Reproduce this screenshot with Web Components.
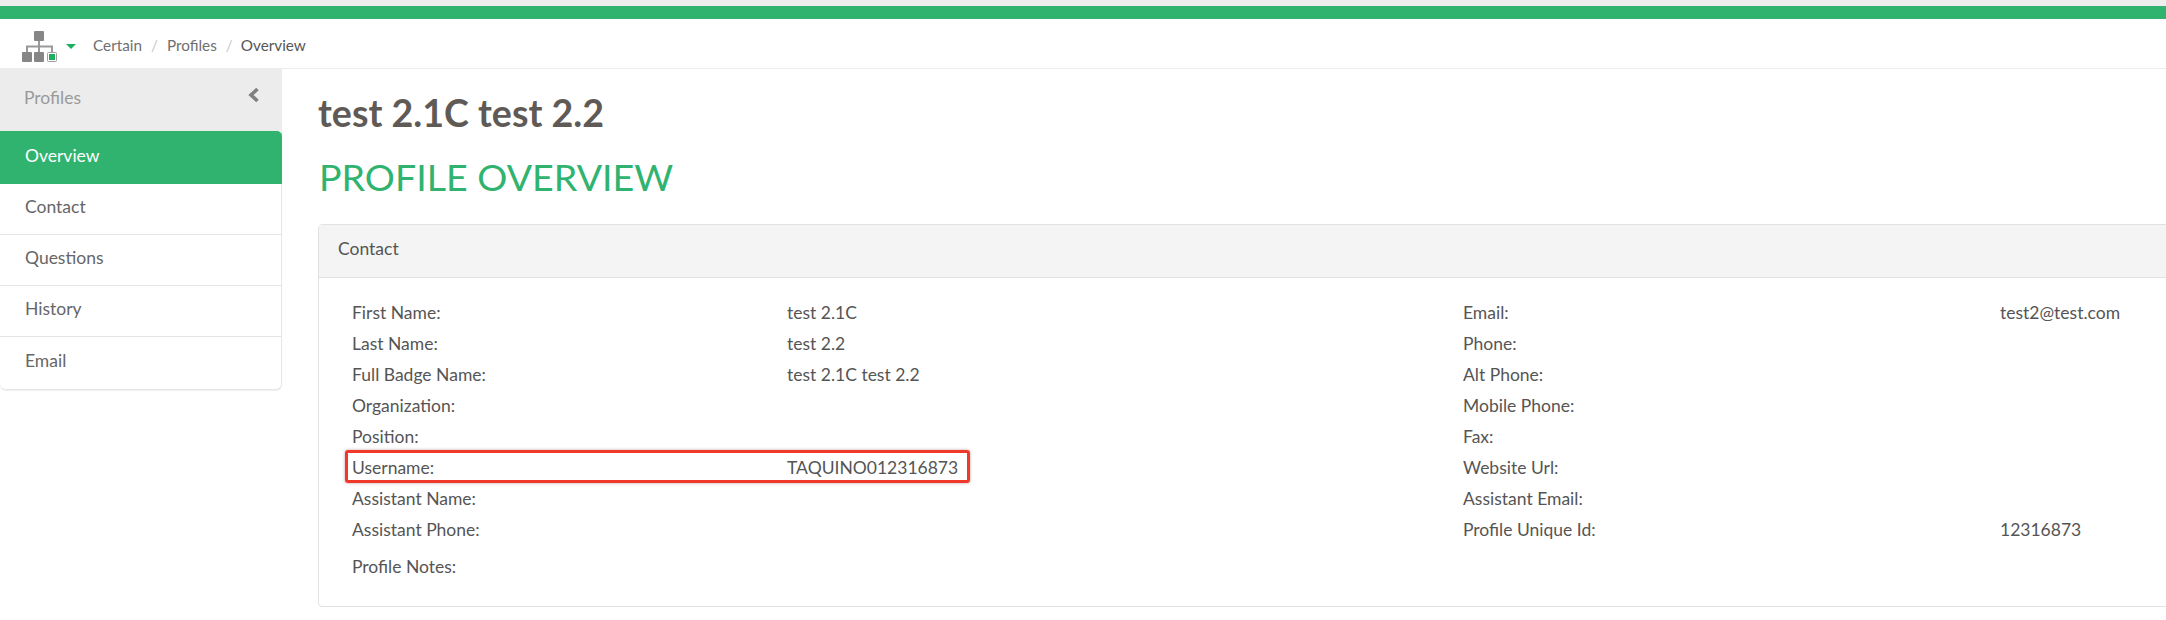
<!DOCTYPE html>
<html>
<head>
<meta charset="utf-8">
<title>Profile Overview</title>
<style>
    html, body { margin: 0; padding: 0; background: #fff; overflow: hidden; }
    body { font-family: Lato, "Liberation Sans", sans-serif; font-size: 17.5px; color: #555; }
</style>
</head>
<body>
<page-shell>
    <bread-crumbs slot="top"></bread-crumbs>
    <side-nav slot="side" title="Profiles">
        <nav-item active>Overview</nav-item>
        <nav-item>Contact</nav-item>
        <nav-item>Questions</nav-item>
        <nav-item>History</nav-item>
        <nav-item last>Email</nav-item>
    </side-nav>
    <page-title>test 2.1C test 2.2</page-title>
    <section-title>PROFILE OVERVIEW</section-title>
    <info-card heading="Contact">
        <info-list slot="left" style="--label-width: 435px">
            <info-row label="First Name:">test 2.1C</info-row>
            <info-row label="Last Name:">test 2.2</info-row>
            <info-row label="Full Badge Name:">test 2.1C test 2.2</info-row>
            <info-row label="Organization:"></info-row>
            <info-row label="Position:"></info-row>
            <info-row label="Username:" marked>TAQUINO012316873</info-row>
            <info-row label="Assistant Name:"></info-row>
            <info-row label="Assistant Phone:"></info-row>
            <info-row label="Profile Notes:" class="notes" style="margin-top: 6px"></info-row>
        </info-list>
        <info-list slot="right" style="--label-width: 537px">
            <info-row label="Email:">test2@test.com</info-row>
            <info-row label="Phone:"></info-row>
            <info-row label="Alt Phone:"></info-row>
            <info-row label="Mobile Phone:"></info-row>
            <info-row label="Fax:"></info-row>
            <info-row label="Website Url:"></info-row>
            <info-row label="Assistant Email:"></info-row>
            <info-row label="Profile Unique Id:">12316873</info-row>
        </info-list>
    </info-card>
</page-shell>

<script>
    // small helper, every element just sets its shadow html once
    class BaseElement extends HTMLElement {
        constructor(html) {
            super();
            this.attachShadow({ mode: 'open' });
            this.shadowRoot.innerHTML = html;
        }
    }

    class PageShell extends BaseElement {
        constructor() {
            super(`
                <style>
                    :host { display: block; width: 2166px; height: 620px; overflow: hidden; }
                    .strip { height: 6px; background: #eeeeee; }
                    .green { height: 13px; background: #30b36f; }
                    .top { height: 49px; border-bottom: 1px solid #ececec; }
                    .cols { display: flex; }
                    .main { flex: none; width: 1884px; padding-left: 36px; }
                </style>
                <div class="strip"></div>
                <div class="green"></div>
                <div class="top"><slot name="top"></slot></div>
                <div class="cols">
                    <slot name="side"></slot>
                    <div class="main"><slot></slot></div>
                </div>
            `);
        }
    }

    class BreadCrumbs extends BaseElement {
        constructor() {
            super(`
                <style>
                    :host { display: flex; align-items: center; height: 49px; padding-left: 22px; font-size: 15.3px; color: #6f6f6f; }
                    svg { display: block; }
                    .icon { margin-top: 5px; }
                    .caret { margin: 6px 0 0 9px; }
                    .items { display: flex; margin-left: 17px; margin-top: 3px; }
                    .sep { color: #c8c8c8; padding: 0 9px; }
                    .sep + span + .sep { padding-right: 8px; }
                    .current { color: #555; }
                </style>
                <svg class="icon" width="35" height="31" viewBox="0 0 35 31">
                    <rect x="12" y="0" width="10" height="10" rx="1" fill="#868686"/>
                    <path d="M17 10v11M5 21v-5.5h25V21" fill="none" stroke="#999" stroke-width="2"/>
                    <rect x="0" y="21" width="10" height="10" rx="1" fill="#868686"/>
                    <rect x="12" y="21" width="10" height="10" rx="1" fill="#868686"/>
                    <rect x="25.5" y="21.5" width="9" height="9" rx="1" fill="#fff" stroke="#a0a0a0"/>
                    <rect x="27" y="23" width="6" height="6" fill="#1fae5f"/>
                </svg>
                <svg class="caret" width="10" height="5" viewBox="0 0 10 5"><path d="M0 0h10L5 5z" fill="#1fae5f"/></svg>
                <div class="items">
                    <span>Certain</span><span class="sep">/</span><span>Profiles</span><span class="sep">/</span><span class="current">Overview</span>
                </div>
            `);
        }
    }

    class SideNav extends BaseElement {
        constructor() {
            super(`
                <style>
                    :host { display: block; flex: none; width: 282px; }
                    .head { display: flex; justify-content: space-between; align-items: center; height: 62px; box-sizing: border-box;
                            padding: 0 22px 5px 24px; background: #ececec; color: #9a9a9a; }
                    svg { display: block; margin-top: -5px; }
                    .list { border: 1px solid #e6e6e6; border-top: 0; border-left: 0; border-radius: 0 0 6px 6px; box-shadow: 0 1px 1px #eee; }
                </style>
                <div class="head"><span id="t"></span>
                    <svg width="13" height="16" viewBox="0 0 13 16"><path d="M10.5 2L4 8l6.5 6" fill="none" stroke="#808080" stroke-width="3.6"/></svg>
                </div>
                <div class="list"><slot></slot></div>
            `);
            this.shadowRoot.querySelector('#t').textContent = this.getAttribute('title');
            this.removeAttribute('title');
        }
    }

    class NavItem extends BaseElement {
        constructor() {
            super(`
                <style>
                    :host { display: flex; align-items: center; box-sizing: border-box; height: 51px; padding: 0 0 5px 25px;
                            border-bottom: 1px solid #e4e4e4; color: #666; }
                    :host([active]) { height: 53px; margin-right: -1px; padding-bottom: 4px; background: #30b36f; color: #fff; border-bottom: 0; border-radius: 0 5px 0 0; }
                    :host([last]) { height: 52px; border-bottom: 0; }
                </style>
                <slot></slot>
            `);
        }
    }

    class PageTitle extends BaseElement {
        constructor() {
            super(`
                <style>
                    :host { display: block; margin-top: 22px; font-size: 37.6px; line-height: 44px; font-weight: 700; color: #5f5a55; }
                </style>
                <slot></slot>
            `);
        }
    }

    class SectionTitle extends BaseElement {
        constructor() {
            super(`
                <style>
                    :host { display: block; margin-top: 17px; padding-left: 1px; font-size: 37.6px; line-height: 50px; font-weight: 400; color: #30b36f; }
                </style>
                <slot></slot>
            `);
        }
    }

    class InfoCard extends BaseElement {
        constructor() {
            super(`
                <style>
                    :host { display: block; margin-top: 22px; width: 1900px; box-sizing: border-box; height: 383px;
                            border: 1px solid #e2e2e2; border-radius: 4px; }
                    .head { height: 53px; box-sizing: border-box; padding: 12px 19px 0; background: #f4f4f4; border-bottom: 1px solid #e2e2e2; line-height: 24px; }
                    .body { display: flex; padding: 19px 0 0 33px; }
                    .left { flex: none; width: 1111px; }
                </style>
                <div class="head" id="h"></div>
                <div class="body">
                    <div class="left"><slot name="left"></slot></div>
                    <div><slot name="right"></slot></div>
                </div>
            `);
            this.shadowRoot.querySelector('#h').textContent = this.getAttribute('heading');
        }
    }

    class InfoList extends BaseElement {
        constructor() {
            super(`
                <style>:host { display: block; }</style>
                <slot></slot>
            `);
        }
    }

    class InfoRow extends BaseElement {
        constructor() {
            super(`
                <style>
                    :host { display: flex; position: relative; height: 31px; line-height: 31px; white-space: nowrap; color: #555; }
                    .label { flex: none; width: var(--label-width, 400px); }
                    .mark { display: none; position: absolute; left: -7px; top: -2px; width: 625px; height: 33px; box-sizing: border-box;
                            border: 3px solid #f0392b; border-radius: 3px; box-shadow: 0 0 3px rgba(120,60,60,.5); }
                    :host([marked]) .mark { display: block; }
                </style>
                <span class="label" id="l"></span><span><slot></slot></span>
                <div class="mark"></div>
            `);
            this.shadowRoot.querySelector('#l').textContent = this.getAttribute('label');
        }
    }

    customElements.define('page-shell', PageShell);
    customElements.define('bread-crumbs', BreadCrumbs);
    customElements.define('side-nav', SideNav);
    customElements.define('nav-item', NavItem);
    customElements.define('page-title', PageTitle);
    customElements.define('section-title', SectionTitle);
    customElements.define('info-card', InfoCard);
    customElements.define('info-list', InfoList);
    customElements.define('info-row', InfoRow);
</script>
</body>
</html>
